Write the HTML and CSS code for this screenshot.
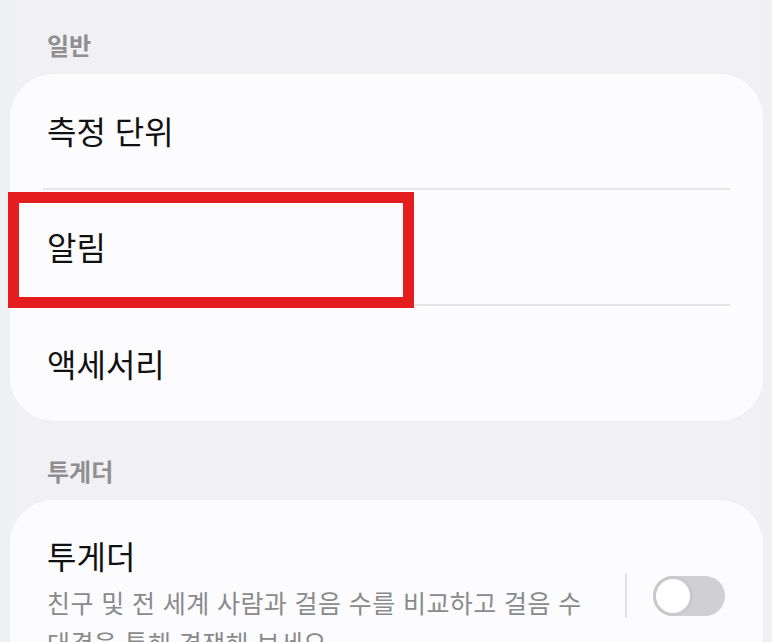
FILE: index.html
```html
<!DOCTYPE html>
<html lang="ko">
<head>
<meta charset="utf-8">
<link rel="stylesheet" href="styles.css">
</head>
<body>
<div class="screen">
  <div class="section-title first">일반</div>
  <div class="card">
    <div class="row">측정 단위</div>
    <div class="divider"></div>
    <div class="row">알림</div>
    <div class="divider"></div>
    <div class="row last">액세서리</div>
  </div>
  <div class="section-title">투게더</div>
  <div class="card card-together">
    <div class="together-text">
      <div class="together-title">투게더</div>
      <div class="together-sub">친구 및 전 세계 사람과 걸음 수를 비교하고 걸음 수 대결을 통해 경쟁해 보세요.</div>
    </div>
    <div class="vline"></div>
    <div class="toggle"><div class="knob"></div></div>
  </div>
</div>
<div class="highlight"></div>
</body>
</html>
```
FILE: styles.css
```css
html, body {
  margin: 0;
  padding: 0;
  background: #eef0f3;
  height: 642px;
  overflow: hidden;
  font-family: "Noto Sans CJK KR", "Noto Sans", sans-serif;
}
.screen {
  margin: 0 9px 0 10px;
  background: #f1f1f3;
  height: 642px;
  overflow: hidden;
}
.section-title {
  height: 79px;
  box-sizing: border-box;
  padding: 33px 0 0 37px;
  font-size: 24px;
  line-height: 34px;
  font-weight: 700;
  color: #8f8f92;
}
.section-title.first {
  height: 74px;
  padding-top: 28px;
}
.card {
  background: #fcfcfe;
  border-radius: 44px;
}
.row {
  height: 114px;
  display: flex;
  align-items: center;
  padding-left: 37px;
  padding-bottom: 2px;
  box-sizing: border-box;
  font-size: 32px;
  color: #111;
}
.row.last {
  height: 115px;
}
.divider {
  height: 2px;
  margin: 0 33px;
  background: #e6e6e8;
}
.card-together {
  display: flex;
  align-items: center;
  padding: 33px 38px 20px 37px;
}
.together-text {
  width: 560px;
}
.together-title {
  font-size: 32px;
  line-height: 44px;
  color: #111;
}
.together-sub {
  margin-top: 5px;
  font-size: 25px;
  letter-spacing: 0.4px;
  line-height: 40px;
  color: #8a8a8d;
  word-break: keep-all;
}
.vline {
  width: 2px;
  height: 45px;
  background: #e2e2e4;
  margin-left: 21px;
  margin-top: -4px;
}
.toggle {
  width: 72px;
  height: 40px;
  margin-left: 26px;
  margin-top: -4px;
  border-radius: 20px;
  background: #d0d0d4;
  position: relative;
}
.knob {
  position: absolute;
  left: 0;
  top: 0;
  width: 40px;
  height: 40px;
  box-sizing: border-box;
  border-radius: 50%;
  background: #fff;
  border: 3px solid #c9c9cd;
}
.highlight {
  position: absolute;
  left: 8px;
  top: 192px;
  width: 406px;
  height: 116px;
  box-sizing: border-box;
  border: 11px solid #e41e1e;
}
```
